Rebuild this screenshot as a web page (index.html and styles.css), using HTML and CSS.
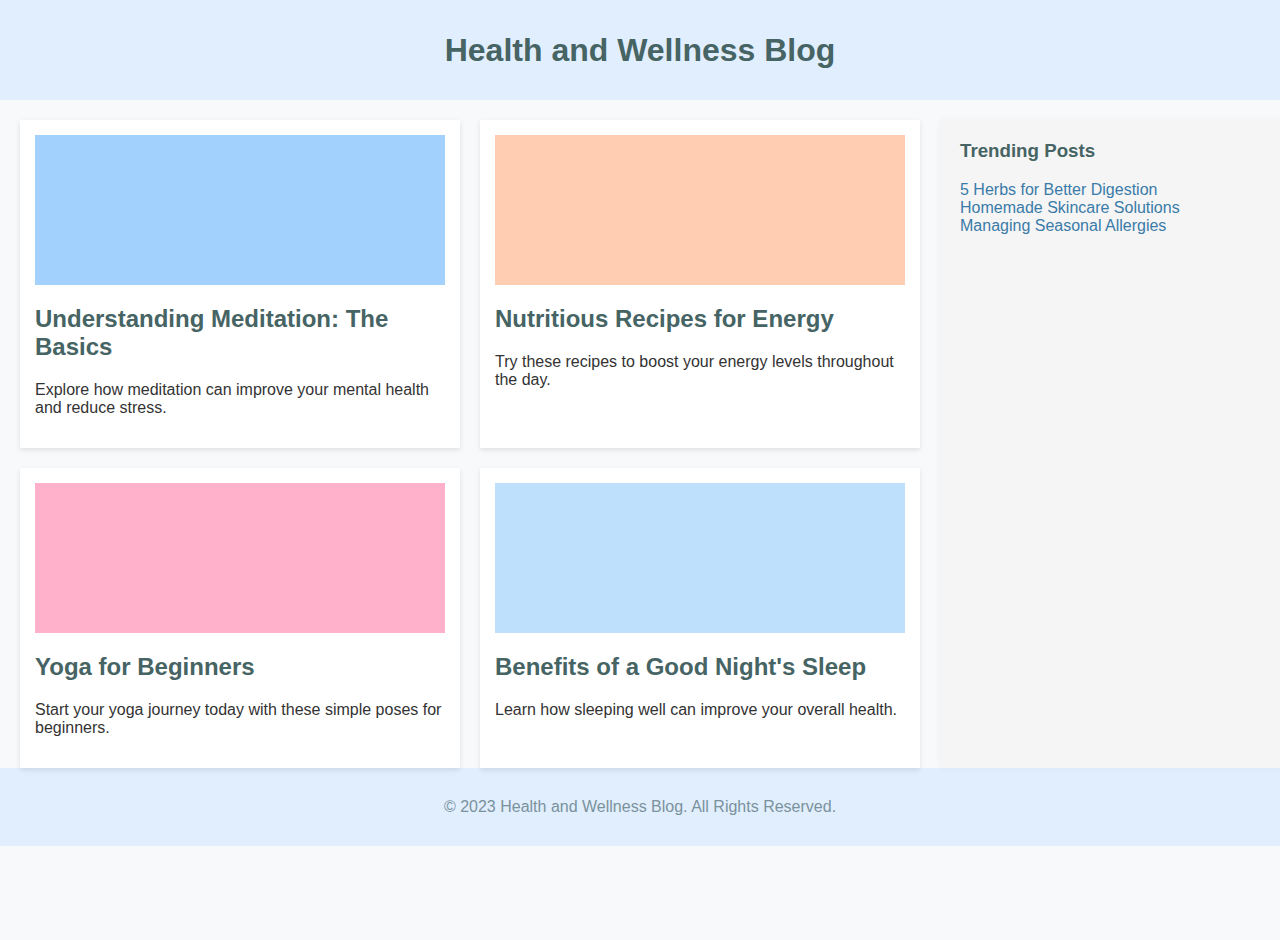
FILE: index.html
```html
<!DOCTYPE html>
<html lang="en">
<head>
<meta charset="utf-8">
<title>Health and Wellness Blog</title>
<link rel="stylesheet" href="styles.css">
</head>
<body>
<header class="site-header">
  <h1 class="site-title">Health and Wellness Blog</h1>
</header>
<main class="layout">
  <section class="posts">
    <article class="card">
      <div class="thumb thumb-blue"></div>
      <h2 class="card-title">Understanding Meditation: The Basics</h2>
      <p class="card-text">Explore how meditation can improve your mental health and reduce stress.</p>
    </article>
    <article class="card">
      <div class="thumb thumb-peach"></div>
      <h2 class="card-title">Nutritious Recipes for Energy</h2>
      <p class="card-text">Try these recipes to boost your energy levels throughout the day.</p>
    </article>
    <article class="card">
      <div class="thumb thumb-pink"></div>
      <h2 class="card-title">Yoga for Beginners</h2>
      <p class="card-text">Start your yoga journey today with these simple poses for beginners.</p>
    </article>
    <article class="card">
      <div class="thumb thumb-sky"></div>
      <h2 class="card-title">Benefits of a Good Night's Sleep</h2>
      <p class="card-text">Learn how sleeping well can improve your overall health.</p>
    </article>
  </section>
  <aside class="sidebar">
    <h3 class="sidebar-title">Trending Posts</h3>
    <ul class="trending">
      <li><a href="#">5 Herbs for Better Digestion</a></li>
      <li><a href="#">Homemade Skincare Solutions</a></li>
      <li><a href="#">Managing Seasonal Allergies</a></li>
    </ul>
  </aside>
</main>
<footer class="site-footer">
  <p class="footer-text">© 2023 Health and Wellness Blog. All Rights Reserved.</p>
</footer>
</body>
</html>
```
FILE: styles.css
```css
html, body {
  margin: 0;
  padding: 0;
}
body {
  font-family: "Liberation Sans", Arial, sans-serif;
  background: #f7f9fb;
  color: #333333;
  font-size: 16px;
}
.site-header {
  background: #e1eefe;
  padding: 10px;
  text-align: center;
}
.site-title {
  margin: 21.5px 0 21.5px;
  font-size: 32px;
  line-height: 37px;
  color: #466464;
}
.layout {
  display: flex;
  padding: 20px 0 0 20px;
}
.posts {
  width: 900px;
  display: grid;
  grid-template-columns: 1fr 1fr;
  gap: 20px;
  align-content: start;
}
.card {
  background: #ffffff;
  padding: 15px;
  box-shadow: 0 2px 5px rgba(0, 0, 0, 0.1);
}
.thumb {
  height: 150px;
}
.thumb-blue { background: #a2d1fd; }
.thumb-peach { background: #ffcdb1; }
.thumb-pink { background: #ffb0cb; }
.thumb-sky { background: #bee0fd; }
.card-title {
  font-size: 24px;
  line-height: 28px;
  margin: 20px 0 20px;
  color: #466464;
}
.card-text {
  margin: 0 0 16px;
  line-height: 18px;
  color: #333333;
}
.sidebar {
  margin-left: 20px;
  width: 340px;
  box-sizing: border-box;
  padding: 20px;
  background: #f5f5f5;
  box-shadow: 0 0 8px rgba(0, 0, 0, 0.04);
}
.sidebar-title {
  margin: 0 0 19px;
  font-size: 18.72px;
  line-height: 22px;
  color: #466464;
}
.trending {
  list-style: none;
  margin: 0;
  padding: 0;
}
.trending li {
  line-height: 18px;
}
.trending a {
  color: #3a7ba8;
  text-decoration: none;
}
.site-footer {
  background: #e1eefe;
  padding: 30px 20px;
  text-align: center;
}
.footer-text {
  margin: 0;
  line-height: 18px;
  color: #7a929c;
}
```
